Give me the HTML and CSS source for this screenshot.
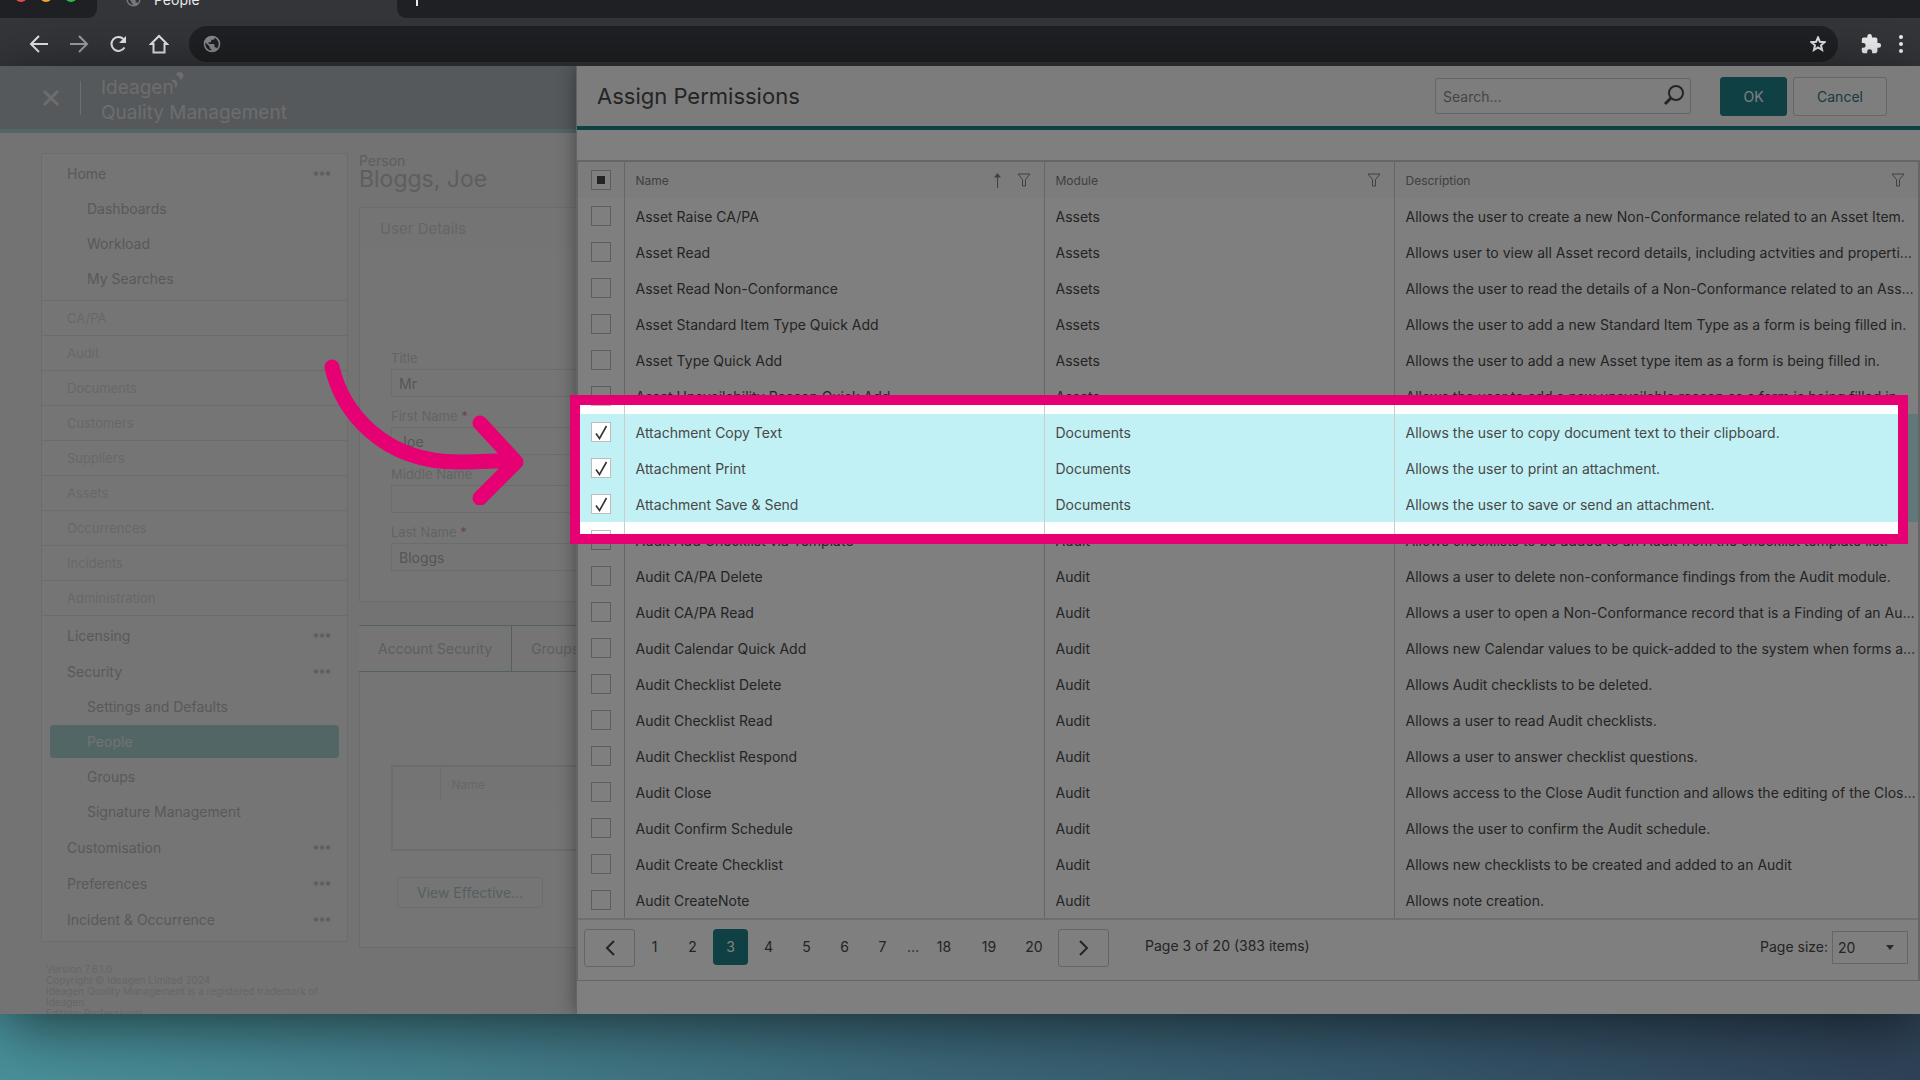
FILE: index.html
```html
<!DOCTYPE html>
<html lang="en">
<head>
  <meta charset="UTF-8">
  <title>People</title>
  <link rel="stylesheet" href="styles.css">
</head>
<body>

  <svg class="defs" width="0" height="0">
    <symbol id="globe" viewBox="0 0 24 24"><path d="M12 2a10 10 0 1 0 0 20 10 10 0 0 0 0-20zm-1 17.9A8 8 0 0 1 4.200 10.200L9 15v1c0 1.100.9 2 2 2v1.900zm6.900-2.500A2 2 0 0 0 16 16h-1v-3a1 1 0 0 0-1-1H8v-2h2a1 1 0 0 0 1-1V7h2a2 2 0 0 0 2-2v-.4a8 8 0 0 1 2.900 12.800z" fill="currentColor"/></symbol>
    <symbol id="funnel" viewBox="0 0 14 14"><path d="M1 1h12L8.500 6.500V13h-3V6.500z" fill="none" stroke="currentColor"/></symbol>
  </svg>

  <div class="browser">
    <div class="tabs">
      <div class="window-dots"><span class="red"></span><span class="amber"></span><span class="green"></span></div>
      <div class="tab"><svg width="17" height="17"><use href="#globe"/></svg>People</div>
      <button class="new-tab" aria-label="New tab"><svg width="14" height="14" viewBox="0 0 14 14"><path d="M7 0v14M0 7h14" stroke="currentColor" stroke-width="2"/></svg></button>
    </div>
    <div class="toolbar">
      <button aria-label="Back"><svg width="20" height="20" viewBox="0 0 20 20"><path d="M19 10H2M10 2l-8 8 8 8" fill="none" stroke="currentColor" stroke-width="2"/></svg></button>
      <button class="muted" aria-label="Forward"><svg width="20" height="20" viewBox="0 0 20 20"><path d="M1 10h17M10 2l8 8-8 8" fill="none" stroke="currentColor" stroke-width="2"/></svg></button>
      <button aria-label="Reload"><svg width="20" height="20" viewBox="0 0 20 20"><path d="M15.500 13.500A7 7 0 1 1 14.500 5" fill="none" stroke="currentColor" stroke-width="2"/><path d="M17 2v7h-7z" fill="currentColor"/></svg></button>
      <button aria-label="Home"><svg width="20" height="20" viewBox="0 0 20 20"><path d="M4.500 18.500V10H2l8-8 8 8h-2.500v8.500z" fill="none" stroke="currentColor" stroke-width="2"/></svg></button>
      <div class="address">
        <svg class="site" width="20" height="20"><use href="#globe"/></svg>
        <input type="text" aria-label="Address">
        <svg width="16" height="16" viewBox="0 0 16 16"><path d="M8 1.500l1.900 4.300 4.600.4-3.500 3.100 1.100 4.700L8 11.500 3.900 14 5 9.300 1.500 6.200l4.600-.4z" fill="none" stroke="currentColor" stroke-width="2"/></svg>
      </div>
      <button class="extensions" aria-label="Extensions"><svg width="22" height="22" viewBox="0 0 24 24"><path d="M20.500 11H19V7a2 2 0 0 0-2-2h-4V3.500a2.500 2.500 0 0 0-5 0V5H4a2 2 0 0 0-2 2v3.800h1.500a2.700 2.700 0 0 1 0 5.400H2V20c0 1.100.9 2 2 2h3.800v-1.500a2.700 2.700 0 0 1 5.400 0V22H17a2 2 0 0 0 2-2v-4h1.500a2.500 2.500 0 0 0 0-5z" fill="currentColor"/></svg></button>
      <button class="menu" aria-label="Menu"><svg width="6" height="20" viewBox="0 0 6 20" fill="currentColor"><circle cx="3" cy="3" r="2"/><circle cx="3" cy="10" r="2"/><circle cx="3" cy="17" r="2"/></svg></button>
    </div>
  </div>

  <div class="page">
    <header class="app-header">
      <button class="close" aria-label="Close menu"><svg width="18" height="18" viewBox="0 0 18 18"><path d="M2 2l14 14M16 2L2 16" stroke="currentColor" stroke-width="3"/></svg></button>
      <div class="brand">
        <div>Ideagen<svg width="12" height="17" viewBox="0 0 12 17" fill="currentColor"><path d="M5 2c2-2 5-1 6 1 1 3 0 5-3 6 0-3-1-4-4-5zM0 9c2-1 4 0 5 2 1 3 0 4-2 6 0-3 0-5-3-6z"/></svg></div>
        <div>Quality Management</div>
      </div>
    </header>

    <div class="app">
      <div class="side">
        <nav class="sidebar">
          <div class="group">
            <a class="item" href="#">Home<span class="dots"></span></a>
            <a class="sub" href="#">Dashboards</a>
            <a class="sub" href="#">Workload</a>
            <a class="sub" href="#">My Searches</a>
          </div>
          <a class="module" href="#">CA/PA</a>
          <a class="module" href="#">Audit</a>
          <a class="module" href="#">Documents</a>
          <a class="module" href="#">Customers</a>
          <a class="module" href="#">Suppliers</a>
          <a class="module" href="#">Assets</a>
          <a class="module" href="#">Occurrences</a>
          <a class="module" href="#">Incidents</a>
          <a class="module" href="#">Administration</a>
          <div class="group">
            <a class="item" href="#">Licensing<span class="dots"></span></a>
            <a class="item" href="#">Security<span class="dots"></span></a>
            <a class="sub" href="#">Settings and Defaults</a>
            <a class="sub active" href="#">People</a>
            <a class="sub" href="#">Groups</a>
            <a class="sub" href="#">Signature Management</a>
            <a class="item" href="#">Customisation<span class="dots"></span></a>
            <a class="item" href="#">Preferences<span class="dots"></span></a>
            <a class="item" href="#">Incident &amp; Occurrence<span class="dots"></span></a>
          </div>
        </nav>
        <div class="legal">
          Version 7.6.1.0<br>
          Copyright © Ideagen Limited 2024<br>
          Ideagen Quality Management is a registered trademark of Ideagen<br>
          Edition: Professional
        </div>
      </div>

      <main class="person">
        <div class="kind">Person</div>
        <h1>Bloggs, Joe</h1>
        <section class="details">
          <h2>User Details</h2>
          <div class="fields">
            <label for="title">Title</label>
            <input id="title" type="text" value="Mr">
            <label for="first">First Name <b>*</b></label>
            <input id="first" type="text" value="Joe">
            <label for="middle">Middle Name</label>
            <input id="middle" type="text">
            <label for="last">Last Name <b>*</b></label>
            <input id="last" type="text" value="Bloggs">
          </div>
        </section>
        <div class="person-tabs">
          <button>Account Security</button>
          <button>Groups</button>
        </div>
        <section class="tab-body">
          <table class="mini">
            <thead><tr><th class="pick"></th><th>Name</th></tr></thead>
            <tbody><tr><td colspan="2"></td></tr></tbody>
          </table>
          <button class="effective">View Effective...</button>
        </section>
      </main>
    </div>

    <div class="panel">
      <div class="panel-header">
        <h2>Assign Permissions</h2>
        <div class="search">
          <input type="text" placeholder="Search..." aria-label="Search">
          <svg width="22" height="22" viewBox="0 0 22 22" fill="none" stroke="currentColor" stroke-width="2"><circle cx="13" cy="9" r="7"/><path d="M8 14l-6 6" stroke-width="3"/></svg>
        </div>
        <button class="ok">OK</button>
        <button class="cancel">Cancel</button>
      </div>

      <div class="grid">
        <table class="permissions">
          <colgroup><col class="c-check"><col class="c-name"><col class="c-module"><col></colgroup>
          <thead>
            <tr>
              <th><input type="checkbox" class="some" aria-label="Select all"></th>
              <th><div class="head"><span>Name</span><svg width="9" height="15" viewBox="0 0 9 15"><path d="M4.500 3v12" stroke="currentColor"/><path d="M4.500 0L8 4.500H1z" fill="currentColor"/></svg><svg width="14" height="14"><use href="#funnel"/></svg></div></th>
              <th><div class="head"><span>Module</span><svg width="14" height="14"><use href="#funnel"/></svg></div></th>
              <th><div class="head"><span>Description</span><svg width="14" height="14"><use href="#funnel"/></svg></div></th>
            </tr>
          </thead>
          <tbody>
            <tr><td><input type="checkbox" aria-label="Asset Raise CA/PA"></td><td>Asset Raise CA/PA</td><td>Assets</td><td>Allows the user to create a new Non-Conformance related to an Asset Item.</td></tr>
            <tr><td><input type="checkbox" aria-label="Asset Read"></td><td>Asset Read</td><td>Assets</td><td>Allows user to view all Asset record details, including actvities and properties.</td></tr>
            <tr><td><input type="checkbox" aria-label="Asset Read Non-Conformance"></td><td>Asset Read Non-Conformance</td><td>Assets</td><td>Allows the user to read the details of a Non-Conformance related to an Asset.</td></tr>
            <tr><td><input type="checkbox" aria-label="Asset Standard Item Type Quick Add"></td><td>Asset Standard Item Type Quick Add</td><td>Assets</td><td>Allows the user to add a new Standard Item Type as a form is being filled in.</td></tr>
            <tr><td><input type="checkbox" aria-label="Asset Type Quick Add"></td><td>Asset Type Quick Add</td><td>Assets</td><td>Allows the user to add a new Asset type item as a form is being filled in.</td></tr>
            <tr><td><input type="checkbox" aria-label="Asset Unavailability Reason Quick Add"></td><td>Asset Unavailability Reason Quick Add</td><td>Assets</td><td>Allows the user to add a new unavailable reason as a form is being filled in.</td></tr>
            <tr class="selected"><td><input type="checkbox" aria-label="Attachment Copy Text" checked></td><td>Attachment Copy Text</td><td>Documents</td><td>Allows the user to copy document text to their clipboard.</td></tr>
            <tr class="selected"><td><input type="checkbox" aria-label="Attachment Print" checked></td><td>Attachment Print</td><td>Documents</td><td>Allows the user to print an attachment.</td></tr>
            <tr class="selected"><td><input type="checkbox" aria-label="Attachment Save &amp; Send" checked></td><td>Attachment Save &amp; Send</td><td>Documents</td><td>Allows the user to save or send an attachment.</td></tr>
            <tr><td><input type="checkbox" aria-label="Audit Add Checklist via Template"></td><td>Audit Add Checklist via Template</td><td>Audit</td><td>Allows checklists to be added to an Audit from the checklist template list.</td></tr>
            <tr><td><input type="checkbox" aria-label="Audit CA/PA Delete"></td><td>Audit CA/PA Delete</td><td>Audit</td><td>Allows a user to delete non-conformance findings from the Audit module.</td></tr>
            <tr><td><input type="checkbox" aria-label="Audit CA/PA Read"></td><td>Audit CA/PA Read</td><td>Audit</td><td>Allows a user to open a Non-Conformance record that is a Finding of an Audit.</td></tr>
            <tr><td><input type="checkbox" aria-label="Audit Calendar Quick Add"></td><td>Audit Calendar Quick Add</td><td>Audit</td><td>Allows new Calendar values to be quick-added to the system when forms are filled in.</td></tr>
            <tr><td><input type="checkbox" aria-label="Audit Checklist Delete"></td><td>Audit Checklist Delete</td><td>Audit</td><td>Allows Audit checklists to be deleted.</td></tr>
            <tr><td><input type="checkbox" aria-label="Audit Checklist Read"></td><td>Audit Checklist Read</td><td>Audit</td><td>Allows a user to read Audit checklists.</td></tr>
            <tr><td><input type="checkbox" aria-label="Audit Checklist Respond"></td><td>Audit Checklist Respond</td><td>Audit</td><td>Allows a user to answer checklist questions.</td></tr>
            <tr><td><input type="checkbox" aria-label="Audit Close"></td><td>Audit Close</td><td>Audit</td><td>Allows access to the Close Audit function and allows the editing of the Closed Audit.</td></tr>
            <tr><td><input type="checkbox" aria-label="Audit Confirm Schedule"></td><td>Audit Confirm Schedule</td><td>Audit</td><td>Allows the user to confirm the Audit schedule.</td></tr>
            <tr><td><input type="checkbox" aria-label="Audit Create Checklist"></td><td>Audit Create Checklist</td><td>Audit</td><td>Allows new checklists to be created and added to an Audit</td></tr>
            <tr><td><input type="checkbox" aria-label="Audit CreateNote"></td><td>Audit CreateNote</td><td>Audit</td><td>Allows note creation.</td></tr>
          </tbody>
        </table>

        <div class="pager">
          <button class="arrow" aria-label="Previous page"><svg width="12" height="16" viewBox="0 0 12 16"><path d="M10 1L3 8l7 7" fill="none" stroke="currentColor" stroke-width="2"/></svg></button>
          <div class="pages">
            <a href="#">1</a><a href="#">2</a><a href="#" class="current">3</a><a href="#">4</a><a href="#">5</a><a href="#">6</a><a href="#">7</a><span>…</span><a href="#">18</a><a href="#">19</a><a href="#">20</a>
          </div>
          <button class="arrow" aria-label="Next page"><svg width="12" height="16" viewBox="0 0 12 16"><path d="M2 1l7 7-7 7" fill="none" stroke="currentColor" stroke-width="2"/></svg></button>
          <div class="summary">Page 3 of 20 (383 items)</div>
          <label for="size">Page size:</label>
          <select id="size"><option>20</option></select>
        </div>

        <!-- dims everything but the three attachment rows -->
        <div class="spotlight">
          <svg class="pointer" width="200" height="150" viewBox="0 0 200 150" fill="none" stroke="currentColor" stroke-width="15" stroke-linecap="round" stroke-linejoin="round"><path d="M8 12c10 44 50 95 126 95 22 0 38-1 56-2M156 68l36 39-36 36"/></svg>
        </div>
      </div>
    </div>
  </div>

</body>
</html>
```

FILE: styles.css
```css
* {
  box-sizing: border-box;
}

body {
  margin: 0;
  height: 100vh;
  padding-bottom: 66px;
  display: flex;
  flex-direction: column;
  overflow: hidden;
  font-family: Inter, "Liberation Sans", sans-serif;
  font-size: 14px;
  color: #484848;
  background: linear-gradient(98deg, #4b969f 0%, #44808c 28%, #3b6778 52%, #35566a 75%, #2f4257 100%);
}

button,
input,
select {
  font: inherit;
  color: inherit;
}

button {
  padding: 0;
  border: none;
  background: none;
  cursor: pointer;
}

a {
  color: inherit;
  text-decoration: none;
}

svg {
  display: block;
}

.defs {
  position: absolute;
}

/* browser chrome */
.browser {
  background: #35363a;
  color: #e8eaed;
}

.tabs {
  display: flex;
  align-items: flex-end;
  height: 18px;
  overflow: hidden;
  background: #35363a;
}

.window-dots {
  display: flex;
  align-items: center;
  gap: 13px;
  width: 97px;
  height: 44px;
  padding-left: 15px;
  border-bottom-right-radius: 9px;
  background: #202124;
}

.window-dots span {
  width: 12px;
  height: 12px;
  border-radius: 50%;
}

.red { background: #ed4c4c; }
.amber { background: #f0a92c; }
.green { background: #2bc140; }

.tab {
  display: flex;
  align-items: center;
  gap: 12px;
  width: 300px;
  height: 38px;
  padding-left: 28px;
  font-size: 14px;
}

.tab svg {
  color: #77797d;
}

.new-tab {
  flex: 1;
  height: 38px;
  padding-left: 13px;
  border-bottom-left-radius: 9px;
  background: #202124;
}

.toolbar {
  display: flex;
  align-items: center;
  height: 48px;
  padding: 4px 16px 0 29px;
  gap: 20px;
}

.muted {
  color: #a0a2a6;
}

.address {
  flex: 1;
  display: flex;
  align-items: center;
  height: 36px;
  padding: 0 12px 0 13px;
  border-radius: 18px;
  background: #202124;
}

.address input {
  flex: 1;
  border: none;
  outline: none;
  background: none;
}

.site {
  color: #8a8c90;
}

.extensions {
  padding-left: 2px;
}

.extensions svg,
.menu svg {
  color: #f4f5f7;
}

.menu {
  margin-left: -4px;
}

/* application */
.page {
  position: relative;
  flex: 1;
  min-height: 0;
  overflow: hidden;
  background: #e6e6e6;
  box-shadow: 0 10px 60px rgba(0, 0, 0, 0.6);
}

.app-header {
  display: flex;
  align-items: center;
  height: 67px;
  padding-left: 42px;
  background: #abb2b6;
  border-bottom: 4px solid #a5cccc;
  color: #dadada;
}

.close {
  display: flex;
  align-items: center;
  height: 34px;
  padding-right: 20px;
  border-right: 1px solid #dadada;
}

.brand {
  padding-left: 20px;
  font-size: 19px;
  line-height: 25px;
}

.brand svg {
  display: inline-block;
  margin-left: -2px;
  vertical-align: 6px;
}

.app {
  display: flex;
  gap: 11px;
  padding: 20px 0 0 41px;
}

.side {
  width: 307px;
}

.sidebar {
  border: 1px solid #d8d8d8;
  background: #ebebeb;
  color: #b2b2b2;
}

.group {
  padding: 1px 8px 4px;
}

.item,
.sub {
  display: flex;
  align-items: center;
  justify-content: space-between;
  height: 36px;
  padding: 0 8px 0 17px;
}

.sub {
  height: 35px;
  padding-left: 37px;
}

.sub.active {
  height: 33px;
  margin: 1px 0;
  border-radius: 4px;
  background: #a5cccc;
  color: #e4e4e4;
}

.dots {
  width: 18px;
  height: 5px;
  background: radial-gradient(circle, #b8b8b8 1px, transparent 3px) 0 0 / 6px 5px;
}

.module {
  display: flex;
  align-items: center;
  height: 35px;
  padding-left: 25px;
  border-top: 1px solid #d8d8d8;
  font-size: 13px;
  color: #cfcfcf;
}

.module + .group {
  border-top: 1px solid #d8d8d8;
}

.legal {
  padding: 22px 20px 0 5px;
  font-size: 10px;
  line-height: 11px;
  color: #cdcdcd;
}

.person {
  flex: 1;
  color: #bcbcbc;
}

.kind {
  font-size: 14px;
  line-height: 15px;
}

h1,
h2 {
  margin: 0;
  font-weight: 400;
}

h1 {
  font-size: 23px;
  line-height: 22px;
}

.details {
  margin-top: 17px;
  border: 1px solid #d8d8d8;
  background: #ebebeb;
}

.details h2 {
  padding: 0 20px;
  font-size: 15px;
  line-height: 42px;
  background: #e9e9e9;
  color: #cacaca;
}

.fields {
  display: grid;
  padding: 100px 0 30px 31px;
}

.fields label {
  line-height: 17px;
  margin-bottom: 2px;
  font-size: 13px;
  color: #c8c8c8;
}

.fields b {
  font-weight: 400;
  color: #cf9090;
}

.fields input {
  height: 28px;
  margin-bottom: 11px;
  padding: 0 7px;
  border: 1px solid #d8d8d8;
  background: #ebebeb;
  color: #acacac;
}

.fields input:last-child {
  margin-bottom: 0;
}

.person-tabs {
  display: flex;
  margin-top: 23px;
  border: solid #a9c3c6;
  border-width: 1px 0;
}

.person-tabs button {
  height: 45px;
  padding: 0 19px;
  border-right: 1px solid #a9c3c6;
  background: #ebebeb;
}

.person-tabs button:last-child {
  flex: 1;
  text-align: left;
}

.tab-body {
  padding: 93px 0 39px 31px;
  border: 1px solid #d8d8d8;
  border-top: none;
  background: #ebebeb;
}

.mini {
  width: 100%;
  border: 2px solid #d8d8d8;
  border-collapse: collapse;
}

.mini th {
  height: 35px;
  padding: 0 11px;
  font-size: 12px;
  font-weight: 400;
  text-align: left;
  color: #cdcdcd;
  background: #e9e9e9;
}

.mini .pick {
  width: 48px;
  border-right: 1px solid #d8d8d8;
}

.mini td {
  height: 49px;
}

.effective {
  height: 31px;
  margin: 26px 0 0 6px;
  padding: 0 19px;
  border: 1px solid #dbdbdb;
  border-radius: 3px;
  color: #a9c0c3;
}

/* slide-over panel, lies over the application */
.panel {
  position: absolute;
  top: 0;
  right: 0;
  bottom: 0;
  width: 70%;
  border-left: 1px solid #c6c6c6;
  background: #fff;
  box-shadow: 0 0 18px rgba(0, 0, 0, 0.4);
}

.panel-header {
  display: flex;
  align-items: center;
  height: 64px;
  padding: 0 33px 0 20px;
  border-bottom: 4px solid #1c8188;
  background: #f8f8f8;
}

.panel-header h2 {
  margin-right: auto;
  font-size: 22px;
}

.search {
  display: flex;
  align-items: center;
  width: 256px;
  height: 36px;
  margin-right: 29px;
  padding: 0 5px 2px 7px;
  border: 1px solid #c4cccc;
  border-radius: 3px;
  background: #fafafa;
}

.search input {
  flex: 1;
  min-width: 0;
  padding: 2px 0 0;
  border: none;
  outline: none;
  background: none;
}

.search input::placeholder {
  color: #8a8a8a;
}

.ok,
.cancel {
  height: 39px;
  border: 1px solid #1c8188;
  border-radius: 3px;
}

.ok {
  width: 67px;
  background: #1c8188;
  color: #fff;
}

.cancel {
  width: 94px;
  margin-left: 6px;
  border-color: #ccc;
  background: #fcfcfc;
  color: #38737c;
}

.grid {
  position: relative;
  margin-top: 30px;
  border: solid #ccc;
  border-width: 2px 2px 1px 1px;
}

.permissions {
  width: 100%;
  table-layout: fixed;
  border-collapse: collapse;
}

.c-check { width: 46px; }
.c-name { width: 420px; }
.c-module { width: 350px; }

.permissions th,
.permissions td {
  height: 36px;
  padding: 0 11px;
  border-right: 1px solid #ccc;
  font-weight: 400;
  text-align: left;
  white-space: nowrap;
  overflow: hidden;
  text-overflow: ellipsis;
}

.permissions th {
  font-size: 12px;
  color: #808080;
  background: #f8f8f8;
}

.permissions th:first-child,
.permissions td:first-child {
  padding: 0 0 0 13px;
}

.permissions th:last-child,
.permissions td:last-child {
  border-right: none;
}

.permissions td:last-child {
  padding-right: 2px;
}

.selected {
  background: #c1f1f5;
}

.head {
  display: flex;
  align-items: center;
  gap: 15px;
  padding-right: 2px;
}

.head span {
  margin-right: auto;
}

input[type="checkbox"] {
  appearance: none;
  display: block;
  width: 20px;
  height: 20px;
  margin: 0;
  border: 1px solid #bcbcbc;
  background: #fff;
}

input[type="checkbox"].some {
  background: linear-gradient(#484848, #484848) center / 8px 8px no-repeat #fff;
}

input[type="checkbox"]:checked {
  background: #fff url("data:image/svg+xml,%3Csvg xmlns='http://www.w3.org/2000/svg' viewBox='0 0 18 18'%3E%3Cpath d='M4 10.500l3.500 5L14.500 3' fill='none' stroke='%23333' stroke-width='1.600'/%3E%3C/svg%3E") center / 18px 18px no-repeat;
}

.pager {
  display: flex;
  align-items: flex-start;
  height: 62px;
  padding: 9px 10px 0 6px;
  border-top: 2px solid #ddd;
  line-height: 36px;
}

.arrow {
  display: flex;
  align-items: center;
  justify-content: center;
  width: 51px;
  height: 38px;
  border: 1px solid #c4cccc;
  border-radius: 3px;
}

.pages {
  display: flex;
  padding-left: 2px;
}

.pages a {
  min-width: 35px;
  margin-right: 3px;
  border-radius: 4px;
  text-align: center;
}

.pages a:nth-last-child(-n+3) {
  min-width: 42px;
}

.pages span {
  width: 20px;
  text-align: center;
}

.pages .current {
  background: #1c8188;
  color: #fff;
}

.summary {
  margin: 0 auto 0 36px;
  line-height: 34px;
}

.pager select {
  appearance: none;
  width: 76px;
  height: 33px;
  margin: 2px 0 0 4px;
  padding: 0 5px;
  border: 1px solid #c4cccc;
  border-radius: 0;
  line-height: 31px;
  background: url("data:image/svg+xml,%3Csvg xmlns='http://www.w3.org/2000/svg' viewBox='0 0 8 5'%3E%3Cpath d='M0 0h8L4 5z' fill='%23555'/%3E%3C/svg%3E") right 13px center / 8px 5px no-repeat;
}

/* highlight box over the selected rows */
.spotlight {
  position: absolute;
  top: 233px;
  left: -8px;
  right: 10px;
  height: 149px;
  border: 10px solid #e60073;
  box-shadow: 0 0 0 2000px rgba(0, 0, 0, 0.5);
  pointer-events: none;
}

.pointer {
  position: absolute;
  top: -50px;
  left: -256px;
  color: #e60073;
}
```
